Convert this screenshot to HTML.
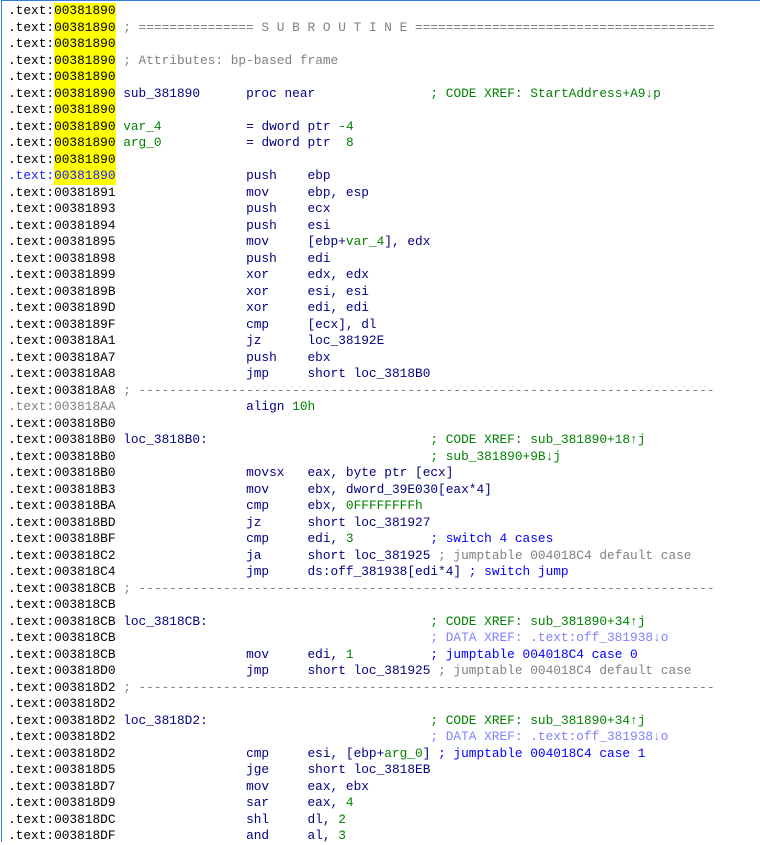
<!DOCTYPE html>
<html><head><meta charset="utf-8">
<style>
html,body{margin:0;padding:0;background:#fff;width:760px;height:842px;overflow:hidden}
.frame{position:absolute;left:1px;top:0;width:759px;height:842px;border-top:1px solid #2f7fd8;border-left:1px solid #2f7fd8;box-sizing:border-box}
pre{position:absolute;left:8px;top:3px;margin:0;font-family:"Liberation Mono",monospace;font-size:12.8px;line-height:16.5px;color:#000;white-space:pre}
.y{background:#ffff00;display:inline-block;line-height:16.5px}
.n{color:#000080}.g{color:#008000}.c{color:#808080}.b{color:#0000ff}.x{color:#008000}.d{color:#8080ff}.s{color:#2020ff}.a{color:#808080}
</style></head><body>
<div class="frame"></div>
<pre>.text:<span class="y">00381890</span>
.text:<span class="y">00381890</span> <span class="c">; =============== S U B R O U T I N E =======================================</span>
.text:<span class="y">00381890</span>
.text:<span class="y">00381890</span> <span class="c">; Attributes: bp-based frame</span>
.text:<span class="y">00381890</span>
.text:<span class="y">00381890</span> <span class="n">sub_381890      proc near</span>               <span class="x">; CODE XREF: StartAddress+A9↓p</span>
.text:<span class="y">00381890</span>
.text:<span class="y">00381890</span> <span class="g">var_4</span>           <span class="n">= dword ptr</span> <span class="g">-4</span>
.text:<span class="y">00381890</span> <span class="g">arg_0</span>           <span class="n">= dword ptr</span>  <span class="g">8</span>
.text:<span class="y">00381890</span>
<span class="s">.text:</span><span class="y s">00381890</span>                 <span class="n">push    ebp</span>
.text:00381891                 <span class="n">mov     ebp, esp</span>
.text:00381893                 <span class="n">push    ecx</span>
.text:00381894                 <span class="n">push    esi</span>
.text:00381895                 <span class="n">mov     [ebp+</span><span class="g">var_4</span><span class="n">], edx</span>
.text:00381898                 <span class="n">push    edi</span>
.text:00381899                 <span class="n">xor     edx, edx</span>
.text:0038189B                 <span class="n">xor     esi, esi</span>
.text:0038189D                 <span class="n">xor     edi, edi</span>
.text:0038189F                 <span class="n">cmp     [ecx], dl</span>
.text:003818A1                 <span class="n">jz      loc_38192E</span>
.text:003818A7                 <span class="n">push    ebx</span>
.text:003818A8                 <span class="n">jmp     short loc_3818B0</span>
.text:003818A8 <span class="c">; ---------------------------------------------------------------------------</span>
<span class="a">.text:003818AA</span>                 <span class="n">align</span> <span class="g">10h</span>
.text:003818B0
.text:003818B0 <span class="n">loc_3818B0:</span>                             <span class="x">; CODE XREF: sub_381890+18↑j</span>
.text:003818B0                                         <span class="x">; sub_381890+9B↓j</span>
.text:003818B0                 <span class="n">movsx   eax, byte ptr [ecx]</span>
.text:003818B3                 <span class="n">mov     ebx, dword_39E030[eax*4]</span>
.text:003818BA                 <span class="n">cmp     ebx,</span> <span class="g">0FFFFFFFFh</span>
.text:003818BD                 <span class="n">jz      short loc_381927</span>
.text:003818BF                 <span class="n">cmp     edi,</span> <span class="g">3</span>          <span class="b">; switch 4 cases</span>
.text:003818C2                 <span class="n">ja      short loc_381925</span> <span class="c">; jumptable 004018C4 default case</span>
.text:003818C4                 <span class="n">jmp     ds:off_381938[edi*4]</span> <span class="b">; switch jump</span>
.text:003818CB <span class="c">; ---------------------------------------------------------------------------</span>
.text:003818CB
.text:003818CB <span class="n">loc_3818CB:</span>                             <span class="x">; CODE XREF: sub_381890+34↑j</span>
.text:003818CB                                         <span class="d">; DATA XREF: .text:off_381938↓o</span>
.text:003818CB                 <span class="n">mov     edi,</span> <span class="g">1</span>          <span class="b">; jumptable 004018C4 case 0</span>
.text:003818D0                 <span class="n">jmp     short loc_381925</span> <span class="c">; jumptable 004018C4 default case</span>
.text:003818D2 <span class="c">; ---------------------------------------------------------------------------</span>
.text:003818D2
.text:003818D2 <span class="n">loc_3818D2:</span>                             <span class="x">; CODE XREF: sub_381890+34↑j</span>
.text:003818D2                                         <span class="d">; DATA XREF: .text:off_381938↓o</span>
.text:003818D2                 <span class="n">cmp     esi, [ebp+</span><span class="g">arg_0</span><span class="n">]</span> <span class="b">; jumptable 004018C4 case 1</span>
.text:003818D5                 <span class="n">jge     short loc_3818EB</span>
.text:003818D7                 <span class="n">mov     eax, ebx</span>
.text:003818D9                 <span class="n">sar     eax,</span> <span class="g">4</span>
.text:003818DC                 <span class="n">shl     dl,</span> <span class="g">2</span>
.text:003818DF                 <span class="n">and     al,</span> <span class="g">3</span>
</pre>
</body></html>
